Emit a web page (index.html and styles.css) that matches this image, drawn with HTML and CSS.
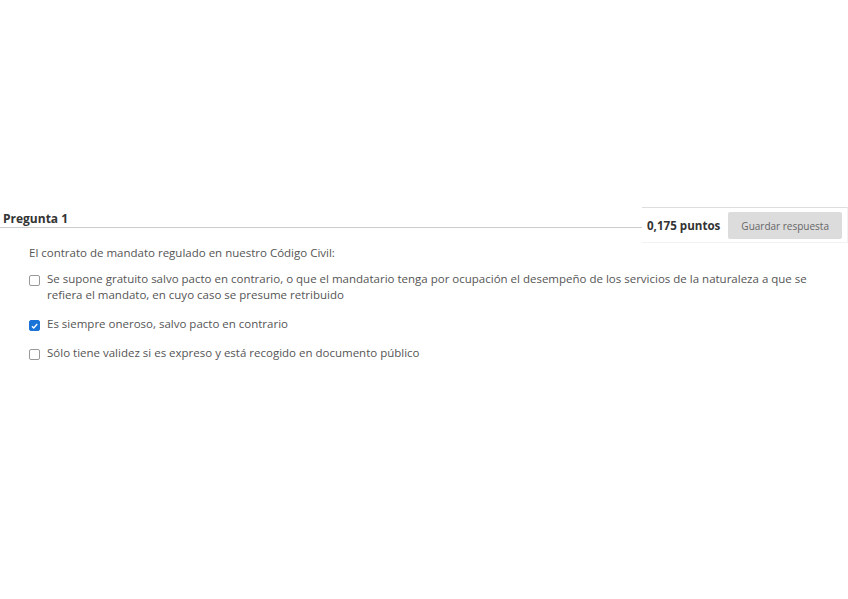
FILE: index.html
```html
<!DOCTYPE html>
<html lang="es">
<head>
    <meta charset="UTF-8">
    <title>Pregunta 1</title>
    <link rel="stylesheet" href="styles.css">
</head>
<body>
    <div class="question">
        <div class="question-head">
            <h3 class="question-title">Pregunta 1</h3>
            <div class="points-box">
                <span class="points">0,175 puntos</span>
                <button type="button" class="btn-save">Guardar respuesta</button>
            </div>
        </div>
        <div class="question-body">
            <p class="statement">El contrato de mandato regulado en nuestro Código Civil:</p>
            <ul class="answers">
                <li class="answer">
                    <span class="check"></span>
                    <span class="answer-text">Se supone gratuito salvo pacto en contrario, o que el mandatario tenga por ocupación el desempeño de los servicios de la naturaleza a que se refiera el mandato, en cuyo caso se presume retribuido</span>
                </li>
                <li class="answer">
                    <span class="check checked">
                        <svg viewBox="0 0 12 12" width="12" height="12"><path d="M2.6 6.2 L5 8.6 L9.6 3.4" fill="none" stroke="#fff" stroke-width="1.8"/></svg>
                    </span>
                    <span class="answer-text">Es siempre oneroso, salvo pacto en contrario</span>
                </li>
                <li class="answer">
                    <span class="check"></span>
                    <span class="answer-text">Sólo tiene validez si es expreso y está recogido en documento público</span>
                </li>
            </ul>
        </div>
    </div>
</body>
</html>
```
FILE: styles.css
```css
body {
    margin: 0;
    font-family: "Open Sans", sans-serif;
    background-color: #fff;
    color: #555;
}
.question {
    padding-top: 207px;
}
.question-head {
    display: flex;
    align-items: flex-start;
}
.question-title {
    flex: 1;
    margin: 0;
    padding: 3px 0 0 3px;
    height: 17px;
    font-size: 12px;
    font-weight: bold;
    color: #333;
    border-bottom: 1px solid #ccc;
}
.points-box {
    display: flex;
    align-items: center;
    gap: 8px;
    padding: 4px 5px 3px 5px;
    border-top: 1px solid #ddd;
    border-bottom: 1px solid #f2f2f2;
    border-right: 1px solid #f2f2f2;
}
.points {
    font-size: 11.6px;
    font-weight: bold;
    color: #333;
}
.btn-save {
    padding: 0 13px;
    height: 27px;
    font-family: "Open Sans", sans-serif;
    font-size: 10px;
    color: #666;
    background-color: #dcdcdc;
    border: none;
    border-radius: 2px;
}
.question-body {
    padding-left: 29px;
    padding-right: 30px;
}
.statement {
    margin: 0;
    padding-top: 2px;
    font-size: 11.5px;
    line-height: 16px;
}
.answers {
    list-style: none;
    margin: 0;
    padding: 0;
}
.answer {
    display: flex;
    gap: 7px;
    margin-top: 13px;
    font-size: 11.5px;
    line-height: 16px;
}
.answer:first-child {
    margin-top: 10px;
}
.check {
    flex: none;
    width: 9px;
    height: 9px;
    margin-top: 4px;
    border: 1px solid #999;
    border-radius: 2px;
    display: flex;
    align-items: center;
    justify-content: center;
}
.check.checked {
    background-color: #1a73d6;
    border-color: #1a73d6;
}
```
